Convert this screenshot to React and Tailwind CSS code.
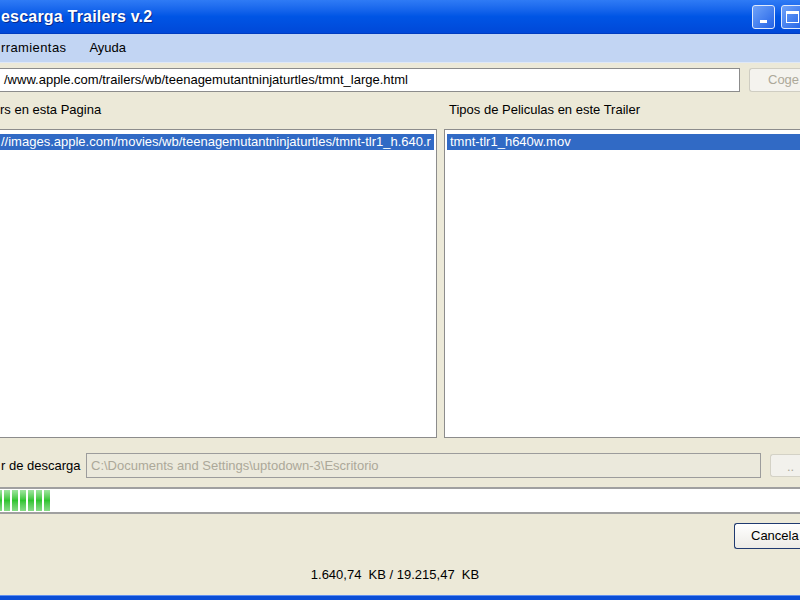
import React from "react";

const font = { fontFamily: '"Liberation Sans", Arial, sans-serif' };

function ProgressBlocks() {
  const blocks = [0, 1, 2, 3, 4, 5, 6];
  return (
    <div className="flex h-full items-stretch gap-[2px] -ml-[4px]">
      {blocks.map((b) => (
        <div
          key={b}
          className="w-[6px] bg-gradient-to-b from-[#9ee69e] via-[#2ec42e] to-[#86dc86]"
        />
      ))}
    </div>
  );
}

export default function App() {
  return (
    <div
      className="w-[800px] h-[600px] overflow-hidden bg-[#ece9d8] flex flex-col text-[13px] text-black"
      style={font}
    >
      {/* Title bar */}
      <div className="h-[34px] shrink-0 flex items-center bg-gradient-to-b from-[#2f7bf5] via-[#0055e5] to-[#0048d8] border-b border-[#003cc0]">
        <div className="flex-1 pl-[1px] text-white font-bold text-[16px] tracking-[0.2px] [text-shadow:1px_1px_0_#0a2a8a] whitespace-nowrap">
          escarga Trailers v.2
        </div>
        <div className="flex gap-[6px] -mr-[4px] shrink-0">
          <div className="w-[23px] h-[24px] rounded-[3px] border border-[#dfe9fb] bg-gradient-to-br from-[#6fa2f9] to-[#2262e6] flex items-end justify-center pb-[5px]">
            <div className="w-[7px] h-[3px] bg-white" />
          </div>
          <div className="w-[23px] h-[24px] rounded-[3px] border border-[#dfe9fb] bg-gradient-to-br from-[#6fa2f9] to-[#2262e6] flex items-center justify-center">
            <div className="w-[13px] h-[12px] border border-white border-t-[3px]" />
          </div>
        </div>
      </div>

      {/* Menu bar */}
      <div className="h-[29px] shrink-0 flex items-center bg-[#c2d5f3] border-b border-[#dfe8f6] whitespace-nowrap">
        <span className="ml-[1px] tracking-[0.4px]">rramientas</span>
        <span className="ml-[23px]">Ayuda</span>
      </div>

      {/* URL row */}
      <div className="flex items-center mt-[5px] h-[24px] shrink-0">
        <div className="w-[740px] shrink-0 h-[24px] bg-white border-y border-r border-[#8c8c8c] flex items-center overflow-hidden whitespace-nowrap">
          <span className="ml-[4px]">/www.apple.com/trailers/wb/teenagemutantninjaturtles/tmnt_large.html</span>
        </div>
        <div className="ml-[9px] w-[51px] shrink-0 h-[24px] rounded-l-[3px] border-y border-l border-[#cfcdc2] bg-[#f4f3ee] text-[#aca899] flex items-center pl-[18px] overflow-hidden whitespace-nowrap">
          Coge
        </div>
      </div>

      {/* Labels */}
      <div className="flex h-[20px] mt-[8px] items-center shrink-0 whitespace-nowrap">
        <div className="w-[444px] shrink-0">rs en esta Pagina</div>
        <div className="pl-[5px]">Tipos de Peliculas en este Trailer</div>
      </div>

      {/* Lists */}
      <div className="flex mt-[9px] h-[309px] shrink-0">
        <div className="w-[437px] shrink-0 bg-white border-y border-r border-[#8c8c8c] pt-[4px] pr-[2px] overflow-hidden">
          <div className="h-[16px] bg-[#316ac5] text-white flex items-center whitespace-nowrap overflow-hidden">
            <span className="ml-[1px]">//images.apple.com/movies/wb/teenagemutantninjaturtles/tmnt-tlr1_h.640.r</span>
          </div>
        </div>
        <div className="ml-[7px] w-[356px] shrink-0 bg-white border-y border-l border-[#8c8c8c] pl-[2px] pt-[4px] overflow-hidden">
          <div className="h-[16px] bg-[#316ac5] text-white flex items-center whitespace-nowrap pl-[3px]">
            tmnt-tlr1_h640w.mov
          </div>
        </div>
      </div>

      {/* Download folder row */}
      <div className="flex items-center mt-[15px] h-[25px] shrink-0 whitespace-nowrap">
        <div className="w-[86px] shrink-0 pl-[1px]">r de descarga</div>
        <div className="w-[675px] shrink-0 h-[25px] bg-[#ebe9dc] border border-[#9c9c9c] text-[#aca899] flex items-center pl-[4px]">
          C:\Documents and Settings\uptodown-3\Escritorio
        </div>
        <div className="ml-[9px] w-[30px] shrink-0 h-[23px] rounded-l-[3px] border-y border-l border-[#d4d2c6] bg-[#f2f1ec] text-[#aca899] flex items-end pl-[16px] pb-[3px] leading-none overflow-hidden">
          ..
        </div>
      </div>

      {/* Progress bar */}
      <div className="mt-[9px] h-[27px] shrink-0 bg-white border-y-2 border-[#a0a0a0] py-[1px]">
        <ProgressBlocks />
      </div>

      {/* Cancel row */}
      <div className="flex justify-end mt-[9px] h-[26px] shrink-0">
        <div className="w-[66px] shrink-0 h-[26px] rounded-l-[3px] border-y border-l border-[#1f3a70] bg-gradient-to-b from-white to-[#ecebe6] flex items-center pl-[16px] whitespace-nowrap overflow-hidden">
          Cancela
        </div>
      </div>

      {/* Status */}
      <div className="flex-1 flex items-start justify-center pt-[16px]">
        <span className="ml-[-10px] whitespace-pre">1.640,74  KB / 19.215,47  KB</span>
      </div>

      {/* Bottom border */}
      <div className="h-[5px] shrink-0 bg-[#0a4ed6] border-t border-[#5f8ff0]" />
    </div>
  );
}
